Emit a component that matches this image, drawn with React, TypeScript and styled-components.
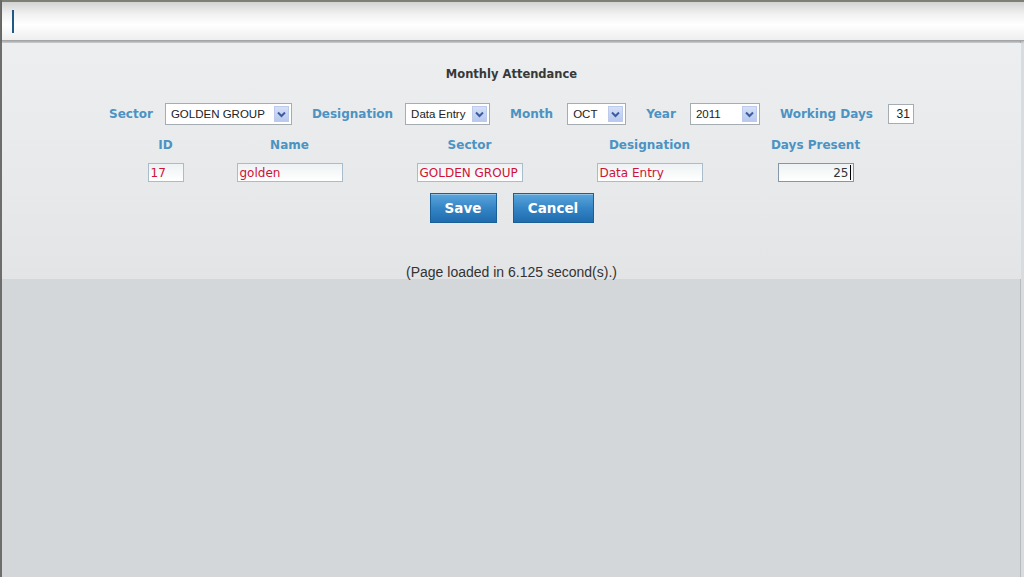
import React from "react";
import styled, { createGlobalStyle } from "styled-components";

const GlobalStyle = createGlobalStyle`
	html, body {
		margin: 0;
		padding: 0;
		background: #d4d7da;
	}
	body {
		font-family: "DejaVu Sans", Verdana, sans-serif;
		width: 1024px;
		height: 577px;
		overflow: hidden;
	}
`;

const Frame = styled.div`
	height: 577px;
	border-left: 2px solid #6d6e6c;
	border-right: 3px solid #d9dcdf;
	box-shadow: inset -1px 0 0 #b9bcbf;
	background: #d4d7da;
	box-sizing: border-box;
`;

const TopBar = styled.div`
	height: 38px;
	border-top: 2px solid #7c8074;
	border-bottom: 1px solid #a3a5a7;
	background: linear-gradient(#d2d2d2 0%, #f0f0f0 30%, #ffffff 60%, #eeeeee 100%);
	box-shadow: 0 1px 2px rgba(0, 0, 0, 0.25);
	display: flex;
	align-items: center;
	padding-left: 10px;
	margin-right: -3px;
`;

const Caret = styled.span`
	width: 2px;
	height: 23px;
	background: #1d5a86;
`;

const Panel = styled.div`
	margin-top: 2px;
	padding: 23px 0 0;
	background: linear-gradient(#eceeef 0%, #e6e8ea 70%, #e2e4e6 100%);
	display: flex;
	flex-direction: column;
	align-items: center;
`;

const Title = styled.div`
	font-size: 11.5px;
	font-weight: bold;
	color: #383838;
	line-height: 16px;
	margin-bottom: 21px;
`;

const FilterRow = styled.div`
	display: flex;
	align-items: center;
	gap: 20px;
	height: 22px;
	margin-bottom: 12px;
`;

const Field = styled.div<{ $gap?: number }>`
	display: flex;
	align-items: center;
	gap: ${p => p.$gap ?? 12}px;
`;

const Label = styled.span`
	font-size: 12px;
	font-weight: bold;
	color: #4b93c3;
`;

const SelectWrap = styled.div<{ $w: number }>`
	position: relative;
	width: ${p => p.$w}px;
	height: 22px;
`;

const Select = styled.select`
	appearance: none;
	width: 100%;
	height: 100%;
	border: 1px solid #a5acb2;
	background: #fff;
	font-family: "Liberation Sans", Arial, sans-serif;
	font-size: 11.5px;
	color: #222;
	padding: 0 0 0 5px;
	margin: 0;
	box-sizing: border-box;
	outline: none;
`;

const Arrow = styled.span`
	position: absolute;
	right: 3px;
	top: 3px;
	width: 15px;
	height: 16px;
	background: linear-gradient(#d6e0f7, #b9c9ee);
	border: 1px solid #bccbeb;
	box-sizing: border-box;
	display: flex;
	align-items: center;
	justify-content: center;
	pointer-events: none;
`;

const SmallBox = styled.div`
	width: 26px;
	height: 20px;
	border: 1px solid #a5acb2;
	background: #fff;
	box-sizing: border-box;
	font-family: "Liberation Sans", Arial, sans-serif;
	font-size: 12px;
	color: #222;
	display: flex;
	align-items: center;
	justify-content: flex-end;
	padding-right: 3px;
`;

const Grid = styled.div`
	display: grid;
	grid-template-columns: 120px 128px 232px 128px 204px;
	justify-items: center;
	row-gap: 10px;
`;

const ColHead = styled.span`
	font-size: 12px;
	font-weight: bold;
	color: #4b93c3;
	line-height: 16px;
`;

const TextBox = styled.div<{ $w: number; $right?: boolean; $focus?: boolean }>`
	width: ${p => p.$w}px;
	height: 19px;
	box-sizing: border-box;
	border: 1px solid ${p => (p.$focus ? "#8596a6" : "#a9bccb")};
	background: linear-gradient(#eef2f4, #ffffff);
	color: #cf1236;
	font-size: 12px;
	display: flex;
	align-items: center;
	justify-content: ${p => (p.$right ? "flex-end" : "flex-start")};
	padding: 0 2px;
	white-space: nowrap;
	overflow: hidden;
`;

const InputCaret = styled.span`
	width: 1px;
	height: 15px;
	background: #000;
	margin-left: 1px;
`;

const Buttons = styled.div`
	display: flex;
	gap: 16px;
	margin-top: 11px;
`;

const Button = styled.button<{ $w: number }>`
	width: ${p => p.$w}px;
	height: 30px;
	border: 1px solid #1a5f95;
	background: linear-gradient(#5aa6dc 0%, #3585c6 50%, #1f6cae 100%);
	box-shadow: inset 0 1px 0 rgba(255, 255, 255, 0.35);
	color: #fff;
	font-family: "DejaVu Sans", Verdana, sans-serif;
	font-size: 13.5px;
	font-weight: bold;
	padding: 0;
	cursor: pointer;
`;

const LoadNote = styled.div`
	margin-top: 42px;
	font-family: "Liberation Sans", Tahoma, sans-serif;
	font-size: 14px;
	color: #333;
	line-height: 14px;
	height: 14px;
`;

function Chevron() {
	return (
		<svg width="9" height="7" viewBox="0 0 9 7">
			<path d="M1 1.5 L4.5 5 L8 1.5" stroke="#3d5ca0" strokeWidth="2" fill="none" />
		</svg>
	);
}

function Dropdown({ width, value }: { width: number; value: string }) {
	return (
		<SelectWrap $w={width}>
			<Select defaultValue={value}>
				<option>{value}</option>
			</Select>
			<Arrow>
				<Chevron />
			</Arrow>
		</SelectWrap>
	);
}

export default function App() {
	return (
		<>
			<GlobalStyle />
			<Frame>
				<TopBar>
					<Caret />
				</TopBar>
				<Panel>
					<Title>Monthly Attendance</Title>
					<FilterRow>
						<Field>
							<Label>Sector</Label>
							<Dropdown width={127} value="GOLDEN GROUP" />
						</Field>
						<Field>
							<Label>Designation</Label>
							<Dropdown width={85} value="Data Entry" />
						</Field>
						<Field $gap={14}>
							<Label>Month</Label>
							<Dropdown width={59} value="OCT" />
						</Field>
						<Field $gap={14}>
							<Label>Year</Label>
							<Dropdown width={70} value="2011" />
						</Field>
						<Field $gap={15}>
							<Label>Working Days</Label>
							<SmallBox>31</SmallBox>
						</Field>
					</FilterRow>
					<Grid>
						<ColHead>ID</ColHead>
						<ColHead>Name</ColHead>
						<ColHead>Sector</ColHead>
						<ColHead>Designation</ColHead>
						<ColHead>Days Present</ColHead>
						<TextBox $w={36}>17</TextBox>
						<TextBox $w={106}>golden</TextBox>
						<TextBox $w={106}>GOLDEN GROUP</TextBox>
						<TextBox $w={106}>Data Entry</TextBox>
						<TextBox $w={76} $right $focus>
							<span style={{ color: "#333" }}>25</span>
							<InputCaret />
						</TextBox>
					</Grid>
					<Buttons>
						<Button $w={67}>Save</Button>
						<Button $w={81}>Cancel</Button>
					</Buttons>
					<LoadNote>(Page loaded in 6.125 second(s).)</LoadNote>
				</Panel>
			</Frame>
		</>
	);
}
